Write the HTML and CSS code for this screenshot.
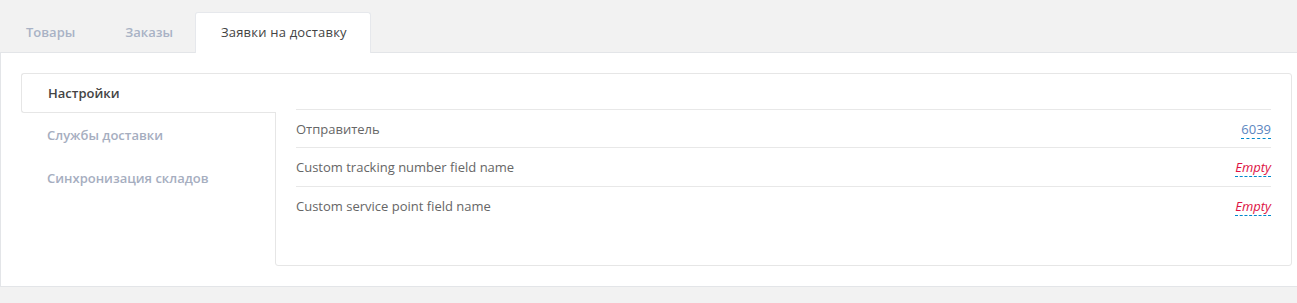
FILE: index.html
```html
<!DOCTYPE html>
<html lang="ru">
<head>
<meta charset="utf-8">
<link rel="stylesheet" href="styles.css">
</head>
<body>
<ul class="tabs">
  <li class="tab">Товары</li>
  <li class="tab">Заказы</li>
  <li class="tab tab-active">Заявки на доставку</li>
</ul>
<div class="panel">
  <div class="box">
    <ul class="side-nav">
      <li class="side-item side-active">Настройки</li>
      <li class="side-item">Службы доставки</li>
      <li class="side-item">Синхронизация складов</li>
    </ul>
    <div class="content">
      <div class="table">
        <div class="row">
          <span class="label">Отправитель</span>
          <span class="editable">6039</span>
        </div>
        <div class="row">
          <span class="label">Custom tracking number field name</span>
          <span class="editable editable-empty">Empty</span>
        </div>
        <div class="row">
          <span class="label">Custom service point field name</span>
          <span class="editable editable-empty">Empty</span>
        </div>
      </div>
    </div>
  </div>
</div>
</body>
</html>
```

FILE: styles.css
```css
* { box-sizing: border-box; }
html, body {
  margin: 0;
  padding: 0;
  background: #f2f2f2;
  font-family: "Open Sans", "Liberation Sans", sans-serif;
  font-size: 13px;
}
ul { list-style: none; margin: 0; padding: 0; }

.tabs {
  display: flex;
  padding-top: 12px;
  padding-left: 1px;
  height: 53px;
  margin-bottom: -1px;
}
.tab {
  height: 40px;
  line-height: 40px;
  padding: 0 25px;
  color: #a9b2c5;
  font-weight: 600;
}
.tab-active {
  background: #fff;
  color: #444;
  font-weight: 500;
  letter-spacing: 0.2px;
  border: 1px solid #e6e8ec;
  border-bottom: none;
  border-radius: 3px 3px 0 0;
  height: 41px;
  line-height: 39px;
  margin-left: -3px;
  padding: 0 23px 0 25px;
  position: relative;
  z-index: 1;
}

.panel {
  background: #fff;
  border: 1px solid #e3e5e8;
  border-right: none;
  padding: 20px 5px 20px 20px;
}
.box {
  display: flex;
  height: 193px;
}
.side-nav {
  width: 254px;
  flex: none;
  display: flex;
  flex-direction: column;
}
.side-item {
  height: 43px;
  line-height: 43px;
  padding-left: 26px;
  color: #a6aebf;
  font-weight: 600;
}
.side-active {
  height: 40px;
  line-height: 38px;
  color: #444;
  background: #fff;
  border: 1px solid #e6e6e6;
  border-right: none;
  border-radius: 3px 0 0 3px;
  margin-right: -1px;
  position: relative;
  z-index: 1;
  margin-bottom: 1px;
}
.content {
  flex: 1;
  border: 1px solid #e6e6e6;
  border-radius: 0 3px 3px 3px;
  padding: 35px 20px 20px 20px;
}
.row {
  display: flex;
  justify-content: space-between;
  align-items: center;
  height: 39px;
  border-top: 1px solid #e8e8e8;
  color: #666;
}
.row:nth-child(1) { height: 38px; }
.row:nth-child(1) .label { padding-top: 1px; }
.editable {
  color: #5b86bf;
  border-bottom: 1px dashed #0088cc;
  line-height: 17px;
  margin-top: 2px;
}
.editable-empty {
  color: #dd1144;
  font-style: italic;
}
```
